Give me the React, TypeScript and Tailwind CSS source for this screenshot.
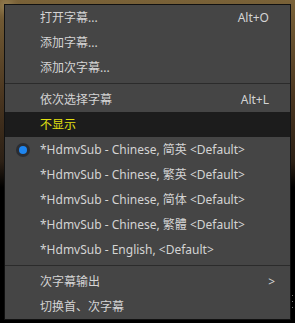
type Item =
  | { kind: 'sep' }
  | { kind: 'item'; label: string; shortcut?: string; active?: boolean; checked?: boolean; submenu?: boolean };

const items: Item[] = [
  { kind: 'item', label: '打开字幕...', shortcut: 'Alt+O' },
  { kind: 'item', label: '添加字幕...' },
  { kind: 'item', label: '添加次字幕...' },
  { kind: 'sep' },
  { kind: 'item', label: '依次选择字幕', shortcut: 'Alt+L' },
  { kind: 'item', label: '不显示', active: true },
  { kind: 'item', label: '*HdmvSub - Chinese, 简英 <Default>', checked: true },
  { kind: 'item', label: '*HdmvSub - Chinese, 繁英 <Default>' },
  { kind: 'item', label: '*HdmvSub - Chinese, 简体 <Default>' },
  { kind: 'item', label: '*HdmvSub - Chinese, 繁體 <Default>' },
  { kind: 'item', label: '*HdmvSub - English, <Default>' },
  { kind: 'sep' },
  { kind: 'item', label: '次字幕输出', submenu: true },
  { kind: 'item', label: '切换首、次字幕' },
];

function MenuRow({ item }: { item: Extract<Item, { kind: 'item' }> }) {
  return (
    <div
      className={
        'relative flex h-[25px] items-center pl-[35px] pr-[21px] ' +
        (item.active ? 'bg-[#1c1c1c] text-[#e2e010]' : 'text-[#d4d4d4]')
      }
    >
      {item.checked && (
        <span className="absolute left-[11px] top-1/2 flex h-[14px] w-[14px] -translate-y-1/2 items-center justify-center rounded-full bg-[#2a2d33]">
          <span className="h-[8px] w-[8px] rounded-full bg-[#1f86f0]" />
        </span>
      )}
      <span className="flex-1 whitespace-pre">{item.label}</span>
      {item.shortcut && <span>{item.shortcut}</span>}
      {item.submenu && <span className="pr-[-4px] mr-[-6px]">&gt;</span>}
    </div>
  );
}

export default function App() {
  return (
    <div className="relative h-[323px] w-[295px] overflow-hidden bg-[linear-gradient(180deg,#7a6238_0%,#4a3620_30%,#2c2015_50%,#000_58%,#000_100%)]">
      <div className="pointer-events-none absolute left-0 top-0 h-[12px] w-[12px] bg-[#9a8456] blur-[4px]" />
      <div
        className="absolute left-[4px] top-[4px] w-[287px] border border-[#111] bg-[#454545] text-[12px] leading-none"
        style={{ fontFamily: '"Noto Sans", "Noto Sans CJK SC", sans-serif' }}
      >
        {items.map((it, i) =>
          it.kind === 'sep' ? (
            <div key={i} className="flex h-[7px] items-center">
              <div className="h-px w-full bg-[#2b2b2b]" />
            </div>
          ) : (
            <MenuRow key={i} item={it} />
          ),
        )}
      </div>
      <div className="absolute right-[2px] top-[295px] flex flex-col gap-[5px]">
        <span className="h-px w-px bg-[#777]" />
        <span className="h-px w-px bg-[#777]" />
        <span className="h-px w-px bg-[#777]" />
      </div>
    </div>
  );
}
